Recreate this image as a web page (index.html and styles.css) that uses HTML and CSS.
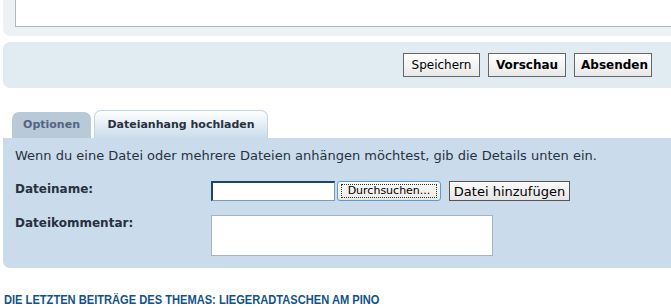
FILE: index.html
```html
<!DOCTYPE html>
<html lang="de">
<head>
<meta charset="utf-8">
<title>Dateianhang</title>
<link rel="stylesheet" href="styles.css">
</head>
<body>
<div class="panel panel-top">
  <textarea class="message"></textarea>
</div>
<div class="panel panel-submit">
  <button class="btn">Speichern</button>
  <button class="btn btn-bold">Vorschau</button>
  <button class="btn btn-bold">Absenden</button>
</div>
<div class="tabs">
  <span class="tab">Optionen</span>
  <span class="tab tab-active">Dateianhang hochladen</span>
</div>
<div class="tabpanel">
  <p class="intro">Wenn du eine Datei oder mehrere Dateien anhängen möchtest, gib die Details unten ein.</p>
  <div class="row">
    <label class="label">Dateiname:</label>
    <div class="ctrl">
      <input class="file-input" type="text">
      <button class="browse"><span class="focus">Durchsuchen...</span></button>
      <button class="add">Datei hinzufügen</button>
    </div>
  </div>
  <div class="row">
    <label class="label">Dateikommentar:</label>
    <div class="ctrl">
      <textarea class="comment"></textarea>
    </div>
  </div>
</div>
<h3 class="topic">Die letzten Beiträge des Themas: Liegeradtaschen am Pino</h3>
</body>
</html>
```
FILE: styles.css
```css
html, body {
  margin: 0;
  padding: 0;
  background: #ffffff;
  overflow: hidden;
}
body {
  width: 671px;
  font-family: "DejaVu Sans", Verdana, sans-serif;
  color: #28313f;
}
.panel {
  margin-left: 3px;
}
.panel-top {
  background: #ecf1f3;
  height: 36px;
  box-sizing: border-box;
  padding-left: 12px;
  border-radius: 0 0 0 7px;
  overflow: hidden;
}
.message {
  display: block;
  width: calc(100% + 10px);
  height: 27px;
  box-sizing: border-box;
  border: 1px solid #a9b8c2;
  border-top: none;
  background: #fff;
  resize: none;
  margin: 0;
  padding: 0;
}
.panel-submit {
  margin-top: 6px;
  background: #e1ebf2;
  height: 46px;
  border-radius: 7px 0 0 7px;
  display: flex;
  justify-content: flex-end;
  align-items: center;
  gap: 8px;
  padding-right: 19px;
  box-sizing: border-box;
}
.btn {
  height: 24px;
  box-sizing: border-box;
  border: 1px solid #666;
  background: linear-gradient(#ffffff, #e9e9e9);
  font-family: "DejaVu Sans", Verdana, sans-serif;
  font-size: 12px;
  color: #000;
  padding: 0 6px;
  margin: 0;
}
.btn:first-child {
  width: 77px;
}
.btn-bold {
  font-weight: bold;
  width: 78px;
}
.tabs {
  margin-top: 23px;
  display: flex;
  align-items: flex-end;
  gap: 3px;
  padding-left: 12px;
  height: 27px;
}
.tab {
  font-size: 11px;
  font-weight: bold;
  color: #536482;
  background: #b8c9d8;
  border-radius: 7px 7px 0 0;
  height: 26px;
  line-height: 26px;
  width: 79px;
  text-align: center;
  box-sizing: border-box;
}
.tab-active {
  color: #28313f;
  width: 174px;
  height: 28px;
  line-height: 28px;
  background: linear-gradient(#ffffff, #cadceb);
  border: 1px solid #c4d4e2;
  border-bottom: none;
}
.tabpanel {
  margin-left: 3px;
  background: #cadceb;
  border-radius: 0 0 0 7px;
  height: 130px;
  box-sizing: border-box;
  padding: 10px 0 0 12px;
}
.intro {
  margin: 0 0 17px 0;
  font-size: 13px;
  line-height: 16px;
}
.row {
  display: flex;
  margin-bottom: 14px;
}
.label {
  width: 196px;
  font-size: 12px;
  font-weight: bold;
  color: #28313f;
  padding-top: 1px;
}
.ctrl {
  display: flex;
  align-items: center;
}
.file-input {
  width: 124px;
  height: 20px;
  box-sizing: border-box;
  border: 1px solid #7a9cb8;
  border-top: 2px solid #1c4466;
  border-left: 2px solid #1c4466;
  background: #fff;
  margin: 0;
  padding: 0;
}
.browse {
  margin: 0 0 0 2px;
  width: 104px;
  height: 20px;
  box-sizing: border-box;
  border: 1px solid #5c9bd0;
  border-radius: 3px;
  background: linear-gradient(#fdfdfb, #e9e8e1);
  padding: 2px 3px;
  font-family: "DejaVu Sans", Tahoma, sans-serif;
  font-size: 11px;
  color: #000;
}
.focus {
  display: block;
  border: 1px dotted #333;
  line-height: 12px;
}
.add {
  margin: 0 0 0 8px;
  width: 121px;
  height: 20px;
  box-sizing: border-box;
  border: 1px solid #555;
  background: linear-gradient(#fafafa, #e6e6e6);
  font-family: "DejaVu Sans", Verdana, sans-serif;
  font-size: 13px;
  color: #000;
  padding: 0;
}
.comment {
  display: block;
  width: 282px;
  height: 41px;
  box-sizing: border-box;
  border: 1px solid #a7b4bf;
  background: #fff;
  resize: none;
  margin: 0;
}
.topic {
  margin: 24px 0 0 4px;
  font-family: "Liberation Sans", Arial, sans-serif;
  font-size: 13px;
  line-height: 16px;
  font-weight: bold;
  text-transform: uppercase;
  color: #105289;
  transform-origin: left center;
  transform: scaleX(0.855);
  white-space: nowrap;
}
```
